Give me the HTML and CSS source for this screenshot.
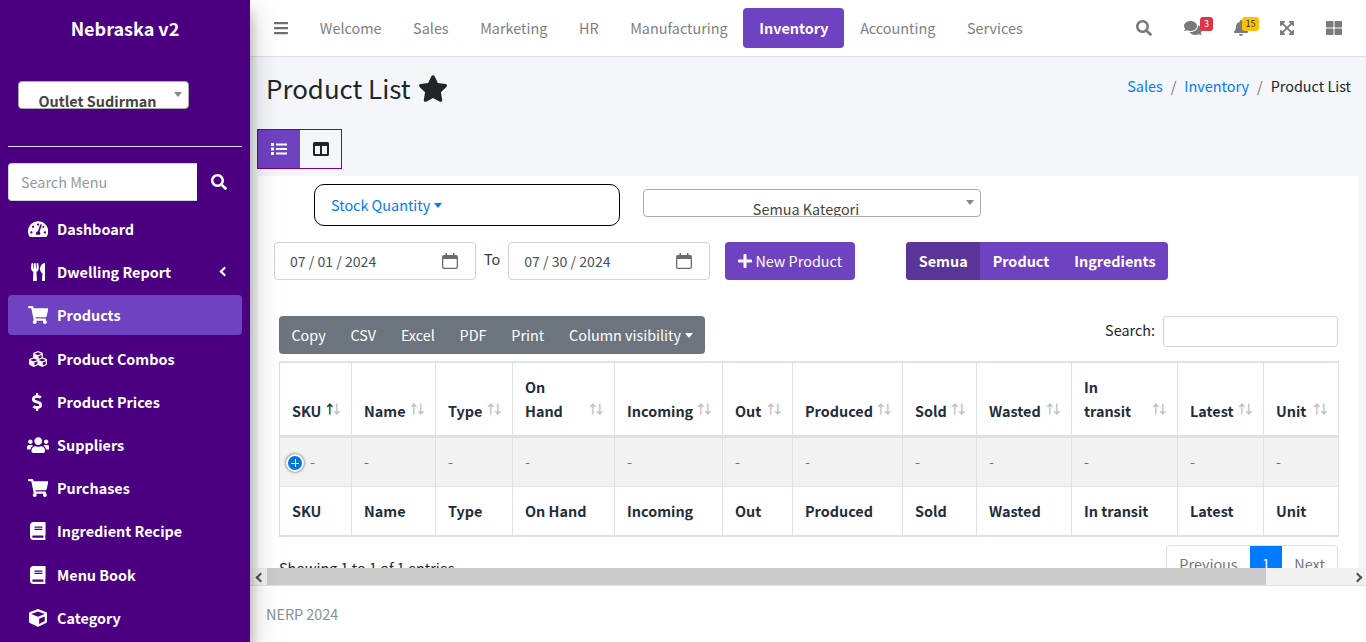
FILE: index.html
```html
<!DOCTYPE html>
<html lang="id">
<head>
  <meta charset="UTF-8" />
  <title>Product List</title>
  <link rel="stylesheet" href="styles.css">
</head>
<body>

<svg class="sprite" aria-hidden="true">
  <symbol id="i-search" viewBox="0 0 512 512"><path d="M505 442.7L405.3 343c-4.5-4.5-10.6-7-17-7H372c27.6-35.3 44-79.7 44-128C416 93.1 322.9 0 208 0S0 93.1 0 208s93.1 208 208 208c48.3 0 92.7-16.4 128-44v16.3c0 6.4 2.5 12.5 7 17l99.7 99.7c9.4 9.4 24.6 9.4 33.9 0l28.3-28.3c9.4-9.4 9.4-24.6.1-34zM208 336c-70.7 0-128-57.2-128-128 0-70.7 57.2-128 128-128 70.7 0 128 57.2 128 128 0 70.7-57.2 128-128 128z"/></symbol>
  <symbol id="i-star" viewBox="0 0 576 512"><path d="M259.3 17.8L194 150.2 47.9 171.5c-26.2 3.8-36.7 36.1-17.7 54.6l105.7 103-25 145.5c-4.5 26.3 23.2 46 46.4 33.7L288 439.6l130.7 68.7c23.2 12.2 50.9-7.4 46.4-33.7l-25-145.5 105.7-103c19-18.5 8.5-50.8-17.7-54.6L382 150.2 316.7 17.8c-11.7-23.6-45.6-23.9-57.4 0z"/></symbol>
  <symbol id="i-cart" viewBox="0 0 576 512"><path d="M528.12 301.319l47.273-208C578.806 78.301 567.391 64 551.99 64H159.208l-9.166-44.81C147.758 8.021 137.93 0 126.529 0H24C10.745 0 0 10.745 0 24v16c0 13.255 10.745 24 24 24h69.883l70.248 343.435C147.325 417.1 136 435.222 136 456c0 30.928 25.072 56 56 56s56-25.072 56-56c0-15.674-6.447-29.835-16.824-40h209.647C430.447 426.165 424 440.326 424 456c0 30.928 25.072 56 56 56s56-25.072 56-56c0-22.172-12.888-41.332-31.579-50.405l5.517-24.276c3.413-15.018-8.002-29.319-23.403-29.319H218.117l-6.545-32h293.145c11.206 0 20.92-7.754 23.403-18.681z"/></symbol>
  <symbol id="i-bars" viewBox="0 0 448 512"><path d="M16 132h416c8.837 0 16-7.163 16-16V76c0-8.837-7.163-16-16-16H16C7.163 60 0 67.163 0 76v40c0 8.837 7.163 16 16 16zm0 160h416c8.837 0 16-7.163 16-16v-40c0-8.837-7.163-16-16-16H16c-8.837 0-16 7.163-16 16v40c0 8.837 7.163 16 16 16zm0 160h416c8.837 0 16-7.163 16-16v-40c0-8.837-7.163-16-16-16H16c-8.837 0-16 7.163-16 16v40c0 8.837 7.163 16 16 16z"/></symbol>
  <symbol id="i-book" viewBox="0 0 448 512"><path d="M448 360V24c0-13.3-10.7-24-24-24H96C43 0 0 43 0 96v320c0 53 43 96 96 96h328c13.3 0 24-10.7 24-24v-16c0-7.5-3.5-14.3-8.9-18.7-4.2-15.4-4.2-59.3 0-74.7 5.4-4.3 8.9-11.1 8.9-18.6zM128 134c0-3.3 2.7-6 6-6h212c3.3 0 6 2.7 6 6v20c0 3.3-2.7 6-6 6H134c-3.3 0-6-2.7-6-6v-20zm0 64c0-3.3 2.7-6 6-6h212c3.3 0 6 2.7 6 6v20c0 3.3-2.7 6-6 6H134c-3.3 0-6-2.7-6-6v-20zm253.4 250H96c-17.7 0-32-14.3-32-32 0-17.6 14.4-32 32-32h285.4c-1.9 17.1-1.9 46.9 0 64z"/></symbol>
  <symbol id="i-plus" viewBox="0 0 448 512"><path d="M416 208H272V64c0-17.67-14.33-32-32-32h-32c-17.67 0-32 14.33-32 32v144H32c-17.67 0-32 14.33-32 32v32c0 17.67 14.33 32 32 32h144v144c0 17.67 14.33 32 32 32h32c17.67 0 32-14.33 32-32V304h144c17.67 0 32-14.33 32-32v-32c0-17.67-14.33-32-32-32z"/></symbol>
  <symbol id="i-dollar" viewBox="0 0 320 512"><path d="M209.2 233.4l-108-31.6C88.7 198.2 80 186.5 80 173.5c0-16.3 13.2-29.5 29.5-29.5h66.3c12.2 0 24.2 3.7 34.2 10.5 6.1 4.1 14.3 3.1 19.5-2l34.8-34c7.1-6.9 6.1-18.4-1.8-24.5C238 74.8 207.4 64.1 176 64V16c0-8.8-7.2-16-16-16h-32c-8.8 0-16 7.2-16 16v48h-2.5C45.8 64-5.4 118.7.5 183.6c4.2 46.1 39.4 83.6 83.8 96.6l102.5 30c12.5 3.7 21.2 15.3 21.2 28.3 0 16.3-13.2 29.5-29.5 29.5h-66.3C100 368 88 364.3 78 357.5c-6.1-4.1-14.3-3.1-19.5 2l-34.8 34c-7.1 6.9-6.1 18.4 1.8 24.5 24.5 19.2 55.1 29.9 86.5 30v48c0 8.8 7.2 16 16 16h32c8.8 0 16-7.2 16-16v-48.2c46.6-.9 90.3-28.6 105.7-72.7 21.5-61.6-14.6-124.8-72.5-141.7z"/></symbol>
  <symbol id="i-users" viewBox="0 0 640 512"><path d="M96 224c35.3 0 64-28.7 64-64s-28.7-64-64-64-64 28.7-64 64 28.7 64 64 64zm448 0c35.3 0 64-28.7 64-64s-28.7-64-64-64-64 28.7-64 64 28.7 64 64 64zm32 32h-64c-17.6 0-33.5 7.1-45.1 18.6 40.3 22.1 68.9 62 75.1 109.4h66c17.7 0 32-14.3 32-32v-32c0-35.3-28.7-64-64-64zm-256 0c61.9 0 112-50.1 112-112S381.9 32 320 32 208 82.1 208 144s50.1 112 112 112zm76.8 32h-8.3c-20.8 10-43.9 16-68.5 16s-47.6-6-68.5-16h-8.3C179.6 288 128 339.6 128 403.2V432c0 26.5 21.5 48 48 48h288c26.5 0 48-21.5 48-48v-28.8c0-63.6-51.6-115.2-115.2-115.2zm-223.7-13.4C161.5 263.1 145.6 256 128 256H64c-35.3 0-64 28.7-64 64v32c0 17.7 14.3 32 32 32h65.9c6.3-47.4 34.9-87.3 75.2-109.4z"/></symbol>
  <symbol id="i-cube" viewBox="0 0 512 512"><path d="M239.1 6.3l-208 78c-18.7 7-31.1 25-31.1 45v225.1c0 18.2 10.3 34.8 26.5 42.9l208 104c13.5 6.8 29.4 6.8 42.9 0l208-104c16.3-8.1 26.5-24.8 26.5-42.9V129.3c0-20-12.4-37.9-31.1-44.9l-208-78C262 2.2 250 2.2 239.1 6.3zM256 68.4l192 72v1.1l-192 78-192-78v-1.1l192-72zm32 356V275.5l160-65v133.9l-160 80z"/></symbol>
  <symbol id="i-gauge" viewBox="0 0 576 512"><path d="M288 32C128.94 32 0 160.94 0 320c0 52.8 14.25 102.26 39.06 144.8 5.61 9.62 16.3 15.2 27.44 15.2h443c11.14 0 21.83-5.58 27.44-15.2C561.75 422.26 576 372.8 576 320c0-159.06-128.94-288-288-288zm0 64c14.71 0 26.58 10.13 30.32 23.65-1.11 2.26-2.64 4.23-3.45 6.67l-9.22 27.67c-5.13 3.49-10.97 6.01-17.64 6.01-17.67 0-32-14.33-32-32S270.33 96 288 96zM96 384c-17.67 0-32-14.33-32-32s14.33-32 32-32 32 14.33 32 32-14.33 32-32 32zm48-160c-17.67 0-32-14.33-32-32s14.33-32 32-32 32 14.33 32 32-14.33 32-32 32zm246.77-72.41l-61.33 184C343.13 347.33 352 364.54 352 384c0 11.72-3.38 22.55-8.88 32H232.88c-5.5-9.45-8.88-20.28-8.88-32 0-33.94 26.5-61.43 59.9-63.59l61.34-184.01c4.17-12.56 17.73-19.45 30.36-15.17 12.57 4.19 19.35 17.79 15.17 30.36zm14.66 57.2l15.52-46.55c3.47-1.29 7.13-2.23 11.05-2.23 17.67 0 32 14.33 32 32s-14.33 32-32 32c-11.38-.01-20.89-6.28-26.57-15.22zM480 384c-17.67 0-32-14.33-32-32s14.33-32 32-32 32 14.33 32 32-14.33 32-32 32z"/></symbol>
  <symbol id="i-utensils" viewBox="0 0 416 512"><path d="M207.9 15.2c.8 4.7 16.1 94.5 16.1 128.8 0 52.3-27.8 89.6-68.9 104.6L168 486.7c.7 13.7-10.2 25.3-24 25.3H80c-13.7 0-24.7-11.5-24-25.3l12.9-238.1C27.7 233.6 0 196.2 0 144 0 109.6 15.3 19.9 16.1 15.2 19.3-5.1 61.4-5.4 64 16.3v141.2c1.3 3.4 15.1 3.2 16 0 1.4-25.3 7.9-139.2 8-141.8 3.3-20.8 44.7-20.8 47.9 0 .2 2.7 6.6 116.5 8 141.8.9 3.2 14.8 3.4 16 0V16.3c2.6-21.6 44.8-21.4 48-1.1zm119.2 285.7l-15 185.1c-1.2 14 9.9 26 23.9 26h56c13.3 0 24-10.7 24-24V24c0-13.2-10.7-24-24-24-82.5 0-221.4 178.5-64.9 300.9z"/></symbol>
  <symbol id="i-cubes" viewBox="0 0 512 512"><path d="M488.6 250.2L392 214V105.5c0-15-9.3-28.4-23.4-33.7l-100-37.5c-8.1-3.1-17.1-3.1-25.3 0l-100 37.5c-14.1 5.3-23.4 18.7-23.4 33.7V214l-96.6 36.2C9.3 255.5 0 268.9 0 283.9V394c0 13.6 7.7 26.1 19.9 32.2l100 50c10.1 5.1 22.1 5.1 32.2 0l103.9-52 103.9 52c10.1 5.1 22.1 5.1 32.2 0l100-50c12.2-6.1 19.9-18.6 19.9-32.2V283.9c0-15-9.3-28.4-23.4-33.7zM358 214.8l-85 31.9v-68.2l85-37v73.3zM154 104.1l102-38.2 102 38.2v.6l-102 41.4-102-41.4v-.6zm84 291.1l-85 42.5v-79.1l85-38.8v75.4zm0-112l-102 41.4-102-41.4v-.6l102-38.2 102 38.2v.6zm240 112l-85 42.5v-79.1l85-38.8v75.4zm0-112l-102 41.4-102-41.4v-.6l102-38.2 102 38.2v.6z"/></symbol>
  <symbol id="i-comments" viewBox="0 0 576 512"><path d="M416 192c0-88.4-93.1-160-208-160S0 103.6 0 192c0 34.3 14.1 65.9 38 92-13.4 30.2-35.5 54.2-35.8 54.5-2.2 2.3-2.8 5.7-1.5 8.7S4.8 352 8 352c36.6 0 66.9-12.3 88.7-25 32.2 15.7 70.3 25 111.3 25 114.9 0 208-71.6 208-160zm122 220c23.9-26 38-57.7 38-92 0-66.9-53.5-124.2-129.3-148.1.9 6.6 1.3 13.3 1.3 20.1 0 105.9-107.7 192-240 192-10.8 0-21.3-.8-31.7-1.9C207.8 439.6 281.8 480 368 480c41 0 79.1-9.2 111.3-25 21.8 12.7 52.1 25 88.7 25 3.2 0 6.1-1.9 7.3-4.8 1.3-2.9.7-6.3-1.5-8.7-.3-.3-22.4-24.2-35.8-54.5z"/></symbol>
  <symbol id="i-bell" viewBox="0 0 448 512"><path d="M224 512c35.32 0 63.97-28.65 63.97-64H160.03c0 35.35 28.65 64 63.97 64zm215.39-149.71c-19.32-20.76-55.47-51.99-55.47-154.29 0-77.7-54.48-139.9-127.94-155.16V32c0-17.67-14.32-32-31.98-32s-31.98 14.33-31.98 32v20.84C118.56 68.1 64.08 130.3 64.08 208c0 102.3-36.15 133.53-55.47 154.29-6 6.45-8.66 14.16-8.61 21.71.11 16.4 12.98 32 32.1 32h383.8c19.12 0 32-15.6 32.1-32 .05-7.55-2.61-15.27-8.61-21.71z"/></symbol>
  <symbol id="i-expand" viewBox="0 0 448 512"><path d="M448 344v112a23.94 23.94 0 0 1-24 24H312c-21.39 0-32.09-25.9-17-41l36.2-36.2L224 295.6 116.77 402.9 153 439c15.09 15.1 4.39 41-17 41H24a23.94 23.94 0 0 1-24-24V344c0-21.4 25.89-32.1 41-17l36.19 36.2L184.46 256 77.18 148.7 41 185c-15.1 15.1-41 4.4-41-17V56a23.94 23.94 0 0 1 24-24h112c21.39 0 32.09 25.9 17 41l-36.2 36.2L224 216.4l107.23-107.3L295 73c-15.09-15.1-4.39-41 17-41h112a23.94 23.94 0 0 1 24 24v112c0 21.4-25.89 32.1-41 17l-36.19-36.2L263.54 256l107.28 107.3L407 327.1c15.1-15.2 41-4.5 41 16.9z"/></symbol>
  <symbol id="i-grid" viewBox="0 0 512 512"><path d="M296 32h192c13.255 0 24 10.745 24 24v160c0 13.255-10.745 24-24 24H296c-13.255 0-24-10.745-24-24V56c0-13.255 10.745-24 24-24zm-80 0H24C10.745 32 0 42.745 0 56v160c0 13.255 10.745 24 24 24h192c13.255 0 24-10.745 24-24V56c0-13.255-10.745-24-24-24zM0 296v160c0 13.255 10.745 24 24 24h192c13.255 0 24-10.745 24-24V296c0-13.255-10.745-24-24-24H24c-13.255 0-24 10.745-24 24zm296 184h192c13.255 0 24-10.745 24-24V296c0-13.255-10.745-24-24-24H296c-13.255 0-24 10.745-24 24v160c0 13.255 10.745 24 24 24z"/></symbol>
  <symbol id="i-list" viewBox="0 0 16 16"><path d="M0 2h3v3H0zM0 6.500h3v3H0zM0 11h3v3H0zM5 2.500h11v2H5zM5 7h11v2H5zM5 11.500h11v2H5z"/></symbol>
  <symbol id="i-columns" viewBox="0 0 16 16"><path fill-rule="evenodd" d="M1.500 1h13A1.500 1.500 0 0 1 16 2.500v11a1.500 1.500 0 0 1-1.500 1.500h-13A1.500 1.500 0 0 1 0 13.500v-11A1.500 1.500 0 0 1 1.500 1zM2 5v8h5V5zm7 0v8h5V5z"/></symbol>
  <symbol id="i-calendar" viewBox="0 0 16 16"><path fill-rule="evenodd" d="M3.500 0h1.500v2h6V0h1.500v2H14a2 2 0 0 1 2 2v10a2 2 0 0 1-2 2H2a2 2 0 0 1-2-2V4a2 2 0 0 1 2-2h1.500zM1.300 6v8c0 .4.300.7.700.7h12c.4 0 .7-.3.700-.7V6z"/></symbol>
</svg>

<div class="app">
  <aside class="sidebar">
    <div class="brand">Nebraska v2</div>
    <div class="outlet-select">Outlet Sudirman<span class="select-arrow"></span></div>
    <hr class="side-line">
    <div class="side-search">
      <input type="text" placeholder="Search Menu">
      <button type="button"><svg class="ic ic-16"><use href="#i-search"/></svg></button>
    </div>
    <nav class="side-nav">
      <a class="side-link"><span class="side-icon"><svg class="ic i-576"><use href="#i-gauge"/></svg></span>Dashboard</a>
      <a class="side-link"><span class="side-icon"><svg class="ic i-416"><use href="#i-utensils"/></svg></span>Dwelling Report<span class="side-caret"></span></a>
      <a class="side-link active"><span class="side-icon"><svg class="ic i-576"><use href="#i-cart"/></svg></span>Products</a>
      <a class="side-link"><span class="side-icon"><svg class="ic i-512"><use href="#i-cubes"/></svg></span>Product Combos</a>
      <a class="side-link"><span class="side-icon"><svg class="ic i-320"><use href="#i-dollar"/></svg></span>Product Prices</a>
      <a class="side-link"><span class="side-icon"><svg class="ic i-640"><use href="#i-users"/></svg></span>Suppliers</a>
      <a class="side-link"><span class="side-icon"><svg class="ic i-576"><use href="#i-cart"/></svg></span>Purchases</a>
      <a class="side-link"><span class="side-icon"><svg class="ic i-448"><use href="#i-book"/></svg></span>Ingredient Recipe</a>
      <a class="side-link"><span class="side-icon"><svg class="ic i-448"><use href="#i-book"/></svg></span>Menu Book</a>
      <a class="side-link"><span class="side-icon"><svg class="ic i-512"><use href="#i-cube"/></svg></span>Category</a>
    </nav>
  </aside>

  <div class="main">
    <header class="topbar">
      <a class="top-burger"><svg class="ic ic-bars"><use href="#i-bars"/></svg></a>
      <a class="top-link">Welcome</a>
      <a class="top-link">Sales</a>
      <a class="top-link">Marketing</a>
      <a class="top-link">HR</a>
      <a class="top-link">Manufacturing</a>
      <a class="top-link active">Inventory</a>
      <a class="top-link">Accounting</a>
      <a class="top-link">Services</a>
      <div class="top-icons">
        <a class="top-icon"><svg class="ic w-16"><use href="#i-search"/></svg></a>
        <a class="top-icon"><svg class="ic w-18"><use href="#i-comments"/></svg><span class="badge badge-red">3</span></a>
        <a class="top-icon"><svg class="ic w-14"><use href="#i-bell"/></svg><span class="badge badge-yellow">15</span></a>
        <a class="top-icon"><svg class="ic w-14"><use href="#i-expand"/></svg></a>
        <a class="top-icon"><svg class="ic w-16"><use href="#i-grid"/></svg></a>
      </div>
    </header>

    <div class="content">
      <div class="page-head">
        <h1>Product List <svg class="star"><use href="#i-star"/></svg></h1>
        <ol class="crumbs">
          <li><a>Sales</a></li>
          <li><a>Inventory</a></li>
          <li>Product List</li>
        </ol>
      </div>

      <div class="view-toggle">
        <button type="button" class="active"><svg><use href="#i-list"/></svg></button>
        <button type="button"><svg><use href="#i-columns"/></svg></button>
      </div>

      <section class="card">
        <div class="row-filter">
          <div class="stock-box"><a>Stock Quantity</a><span class="caret"></span></div>
          <div class="cat-select">Semua Kategori<span class="select-arrow"></span></div>
        </div>

        <div class="row-dates">
          <div class="date-box">07 / 01 / 2024<svg><use href="#i-calendar"/></svg></div>
          <span class="to">To</span>
          <div class="date-box">07 / 30 / 2024<svg><use href="#i-calendar"/></svg></div>
          <a class="btn-new"><svg><use href="#i-plus"/></svg>New Product</a>
          <div class="type-group">
            <a class="active">Semua</a>
            <a>Product</a>
            <a>Ingredients</a>
          </div>
        </div>

        <div class="row-tools">
          <div class="export-group">
            <a>Copy</a><a>CSV</a><a>Excel</a><a>PDF</a><a>Print</a><a>Column visibility<span class="caret"></span></a>
          </div>
          <label class="table-search">Search: <input type="search"></label>
        </div>

        <table class="stock-table">
          <colgroup>
            <col class="c-72"><col class="c-84"><col class="c-77"><col class="c-102"><col class="c-108"><col class="c-70">
            <col class="c-110"><col class="c-74"><col class="c-95"><col class="c-106"><col class="c-86"><col class="c-75">
          </colgroup>
          <thead>
            <tr>
              <th class="sorted">SKU</th>
              <th>Name</th>
              <th>Type</th>
              <th>On<br>Hand</th>
              <th>Incoming</th>
              <th>Out</th>
              <th>Produced</th>
              <th>Sold</th>
              <th>Wasted</th>
              <th>In<br>transit</th>
              <th>Latest</th>
              <th>Unit</th>
            </tr>
          </thead>
          <tbody>
            <tr>
              <td class="first"><span class="row-plus"></span>-</td>
              <td>-</td><td>-</td><td>-</td><td>-</td><td>-</td><td>-</td><td>-</td><td>-</td><td>-</td><td>-</td><td>-</td>
            </tr>
          </tbody>
          <tfoot>
            <tr>
              <th>SKU</th><th>Name</th><th>Type</th><th>On Hand</th><th>Incoming</th><th>Out</th>
              <th>Produced</th><th>Sold</th><th>Wasted</th><th>In transit</th><th>Latest</th><th>Unit</th>
            </tr>
          </tfoot>
        </table>

        <div class="row-paging">
          <div class="entries">Showing 1 to 1 of 1 entries</div>
          <div class="pager">
            <a>Previous</a><a class="active">1</a><a>Next</a>
          </div>
        </div>
      </section>
    </div>

    <div class="hscroll">
      <span class="hscroll-btn left"></span>
      <span class="hscroll-thumb"></span>
      <span class="hscroll-btn right"></span>
    </div>

    <footer class="foot">NERP 2024</footer>
  </div>
</div>

</body>
</html>
```

FILE: styles.css
```css
* {
  box-sizing: border-box;
}

html, body {
  height: 100%;
}

body {
  margin: 0;
  overflow: hidden;
  font-family: "Noto Sans CJK SC", "Noto Sans", sans-serif;
  font-size: 14.4px;
  line-height: 24px;
  color: #212529;
}

.sprite {
  display: none;
}

.ic {
  fill: currentColor;
  display: block;
}

.app {
  display: flex;
  height: 642px;
}

/* sidebar */
.sidebar {
  width: 250px;
  flex: none;
  background: #4b0082;
  color: #fff;
  position: relative;
  z-index: 2;
  box-shadow: 0 14px 28px rgba(0,0,0,0.25), 0 10px 10px rgba(0,0,0,0.22);
  overflow: hidden;
}

.brand {
  height: 57px;
  line-height: 57px;
  text-align: center;
  font-size: 18px;
  font-weight: 700;
}

.outlet-select, .cat-select {
  position: relative;
  height: 28px;
  padding: 5px 20px 0 8px;
  line-height: 28px;
  background: #fff;
  color: #444;
  text-align: center;
  overflow: hidden;
  border: 1px solid #aaa;
  border-radius: 4px;
  white-space: nowrap;
}

.outlet-select {
  width: 171px;
  margin: 24px 0 0 18px;
  font-weight: 700;
}

.select-arrow {
  position: absolute;
  top: 10px;
  right: 6px;
  border-style: solid;
  border-width: 5px 4px 0 4px;
  border-color: #888 transparent transparent transparent;
}

.side-line {
  margin: 37px 8px 0;
  border: 0;
  border-top: 1px solid #e6dff0;
}

.side-search {
  display: flex;
  margin: 16px 8px 0;
  height: 38px;
}

.side-search input {
  width: 189px;
  height: 38px;
  padding: 0 12px 2px;
  border: 1px solid #ced4da;
  border-right: 0;
  border-radius: 4px 0 0 4px;
  font: inherit;
  background: #fff;
}

.side-search input::placeholder {
  color: #939ba2;
}

.side-search button {
  flex: 1;
  border: 0;
  background: none;
  color: #fff;
  display: flex;
  align-items: center;
  justify-content: center;
  padding: 0 2px 0 0;
}

.ic-16 {
  width: 16px;
  height: 16px;
}

.side-nav {
  margin-top: 8px;
  padding: 0 8px;
}

.side-link {
  position: relative;
  display: flex;
  align-items: center;
  height: 40px;
  margin-bottom: 3.2px;
  padding-left: 16px;
  border-radius: 4px;
  color: #fff;
  font-weight: 700;
}

.side-link.active {
  background: #6f42c1;
}

.side-icon {
  width: 28px;
  margin-right: 5px;
  display: flex;
  justify-content: center;
}

.side-icon .ic {
  height: 18px;
}

.i-576 { width: 20.25px; }
.i-512 { width: 18px; }
.i-448 { width: 15.75px; }
.i-416 { width: 14.6px; }
.i-320 { width: 11.25px; }
.i-640 { width: 22.5px; }

.side-caret {
  position: absolute;
  left: 213px;
  top: 16px;
  width: 7px;
  height: 7px;
  border-left: 2.5px solid #fff;
  border-bottom: 2.5px solid #fff;
  transform: rotate(45deg);
}

/* main column */
.main {
  flex: 1;
  min-width: 0;
  display: flex;
  flex-direction: column;
}

.topbar {
  flex: none;
  height: 57px;
  display: flex;
  align-items: center;
  padding: 0 8px;
  background: #fff;
  border-bottom: 1px solid #dee2e6;
}

.top-burger {
  padding: 0 16px;
  color: #6f6f6f;
}

.ic-bars {
  width: 14px;
  height: 16px;
}

.top-link {
  height: 40px;
  line-height: 40px;
  padding: 0 15.800px;
  color: #7f7f7f;
  border-radius: 4px;
}

.top-link.active {
  background: #6f42c1;
  color: #fff;
  font-weight: 700;
}

.top-icons {
  margin-left: auto;
  display: flex;
  align-items: center;
  color: #7a7a7a;
}

.top-icon {
  position: relative;
  padding: 0 16px;
}

.w-14 { width: 14px; height: 16px; }
.w-16 { width: 16px; height: 16px; }
.w-18 { width: 18px; height: 16px; }

.badge {
  position: absolute;
  top: -3px;
  height: 14px;
  padding: 0 3px;
  line-height: 14px;
  font-size: 9px;
  border-radius: 3px;
  text-align: center;
}

.badge-red {
  left: 32px;
  width: 13px;
  background: #dc3545;
  color: #fff;
}

.badge-yellow {
  left: 24px;
  width: 17px;
  background: #ffc107;
  color: #1f2d3d;
}

.content {
  flex: 1;
  min-height: 0;
  overflow: hidden;
  background: #f4f6f9;
}

.page-head {
  height: 72px;
  padding: 14px 15px 0 16px;
  display: flex;
  align-items: flex-start;
  justify-content: space-between;
}

.page-head h1 {
  margin: 0;
  font-size: 25.9px;
  line-height: 34px;
  font-weight: 400;
  display: flex;
  align-items: center;
  gap: 7px;
}

.star {
  width: 30px;
  height: 27px;
  fill: #212529;
}

.crumbs {
  display: flex;
  list-style: none;
  margin: 0;
  padding: 3px 0 0;
}

.crumbs li + li::before {
  content: "/";
  color: #6c757d;
  padding: 0 8px;
}

.crumbs a {
  color: #007bff;
}

.view-toggle {
  display: flex;
  width: 85px;
  height: 40px;
  margin-left: 7px;
  border: 1px solid #800080;
}

.view-toggle button {
  width: 42px;
  border: 0;
  padding: 0;
  background: none;
  color: #212529;
  display: flex;
  align-items: center;
  justify-content: center;
}

.view-toggle button + button {
  width: 41px;
}

.view-toggle button.active {
  background: #6f42c1;
  color: #fff;
}

.view-toggle svg {
  width: 16px;
  height: 16px;
  fill: currentColor;
}

.card {
  margin: 7px 8px 0;
  height: 392px;
  background: #fff;
  overflow: hidden;
}

.row-filter {
  display: flex;
  align-items: flex-start;
  padding: 8px 0 0 56px;
}

.stock-box {
  width: 306px;
  height: 42px;
  padding-left: 16px;
  line-height: 40px;
  border: 1px solid #000;
  border-radius: 10px;
  color: #007bff;
}

.caret {
  display: inline-block;
  margin-left: 4px;
  vertical-align: 3px;
  border-style: solid;
  border-width: 5px 4.5px 0 4.5px;
  border-color: currentColor transparent transparent transparent;
}

.cat-select {
  width: 338px;
  margin: 5px 0 0 23px;
}

.row-dates {
  display: flex;
  align-items: flex-start;
  padding: 16px 0 0 16px;
}

.date-box {
  width: 202px;
  height: 38px;
  padding: 0 15px;
  display: flex;
  align-items: center;
  justify-content: space-between;
  border: 1px solid #ced4da;
  border-radius: 4px;
  color: #495057;
  font-size: 14.100px;
}

.date-box svg {
  width: 16px;
  height: 16px;
  fill: #6b6b6b;
  margin-right: 2px;
}

.to {
  margin: 5px 8px 0;
  color: #343a40;
}

.btn-new {
  margin-left: 15px;
  width: 130px;
  height: 38px;
  display: flex;
  align-items: center;
  justify-content: center;
  background: #6f42c1;
  color: #fff;
  border-radius: 4px;
}

.btn-new svg {
  width: 14px;
  height: 16px;
  fill: #fff;
  margin-right: 3px;
}

.type-group {
  margin-left: 51px;
  display: flex;
  height: 38px;
  border-radius: 4px;
  overflow: hidden;
  background: #6f42c1;
  color: #fff;
  font-weight: 700;
  line-height: 38px;
}

.type-group a {
  padding: 0 12.500px;
}

.type-group a.active {
  background: #59359a;
}

.row-tools {
  display: flex;
  justify-content: space-between;
  align-items: flex-start;
  padding: 36px 20px 0 21px;
}

.export-group {
  display: flex;
  height: 38px;
  line-height: 38px;
  background: #6c757d;
  color: #fff;
  border-radius: 4px;
}

.export-group a {
  padding: 0 12.400px;
}

.table-search {
  display: flex;
  align-items: flex-start;
  gap: 8px;
  line-height: 28px;
  color: #212529;
}

.table-search input {
  width: 175px;
  height: 31px;
  border: 1px solid #ced4da;
  border-radius: 3px;
  padding: 0 8px;
  background: #fff;
}

/* table */
.stock-table {
  width: 1059px;
  margin: 7px 0 0 21px;
  table-layout: fixed;
  border-collapse: collapse;
}

.c-72 { width: 72px; }
.c-84 { width: 84px; }
.c-77 { width: 77px; }
.c-102 { width: 102px; }
.c-108 { width: 108px; }
.c-70 { width: 70px; }
.c-110 { width: 110px; }
.c-74 { width: 74px; }
.c-95 { width: 95px; }
.c-106 { width: 106px; }
.c-86 { width: 86px; }
.c-75 { width: 75px; }

.stock-table th, .stock-table td {
  padding: 12px;
  border: 1px solid #dee2e6;
  text-align: left;
  font-weight: 700;
  color: #1f2d3d;
  white-space: nowrap;
}

.stock-table thead th {
  position: relative;
  vertical-align: bottom;
  border-top-width: 2px;
  border-bottom-width: 3px;
}

.stock-table thead th::before,
.stock-table thead th::after {
  position: absolute;
  bottom: 14px;
  font-size: 12.500px;
  font-weight: 700;
  opacity: 0.3;
}

.stock-table thead th::before {
  content: "\2191";
  right: 15px;
}

.stock-table thead th::after {
  content: "\2193";
  right: 8px;
}

.stock-table thead th.sorted::before {
  opacity: 1;
}

.stock-table td {
  font-weight: 400;
  color: #6c757d;
  background: #f2f2f2;
}

.stock-table td.first {
  position: relative;
  padding-left: 30px;
}

.row-plus {
  position: absolute;
  left: 6px;
  top: 16px;
  width: 18px;
  height: 18px;
  border: 2px solid #fff;
  border-radius: 50%;
  background: #0275d8;
  box-shadow: 0 0 3px #444;
}

.row-plus::before, .row-plus::after {
  content: "";
  position: absolute;
  background: #fff;
}

.row-plus::before {
  left: 3px;
  top: 6.500px;
  width: 8px;
  height: 1px;
}

.row-plus::after {
  left: 6.500px;
  top: 3px;
  width: 1px;
  height: 8px;
}

.stock-table tfoot th {
  border-bottom-width: 2px;
}

.row-paging {
  display: flex;
  justify-content: space-between;
  padding: 8px 20px 0 21px;
}

.entries {
  padding-top: 11px;
}

.pager {
  display: flex;
  height: 38px;
  line-height: 36px;
  color: #6c757d;
  border: 1px solid #dee2e6;
  border-radius: 4px;
}

.pager a {
  padding: 0 12.200px;
}

.pager a.active {
  background: #007bff;
  color: #fff;
}

/* fake horizontal scrollbar of the page */
.hscroll {
  flex: none;
  height: 17px;
  display: flex;
  background: #f1f1f1;
}

.hscroll-btn {
  width: 17px;
  position: relative;
}

.hscroll-btn::before {
  content: "";
  position: absolute;
  top: 6px;
  width: 5px;
  height: 5px;
  border-left: 2px solid #505050;
  border-bottom: 2px solid #505050;
}

.hscroll-btn.left::before {
  left: 7px;
  transform: rotate(45deg);
}

.hscroll-btn.right {
  margin-left: 83px;
}

.hscroll-btn.right::before {
  left: 5px;
  transform: rotate(225deg);
}

.hscroll-thumb {
  width: 999px;
  background: #cbcbcb;
}

.foot {
  flex: none;
  height: 57px;
  padding: 16px 16px 0;
  border-top: 1px solid #dee2e6;
  background: #fff;
  color: #869099;
}
```
